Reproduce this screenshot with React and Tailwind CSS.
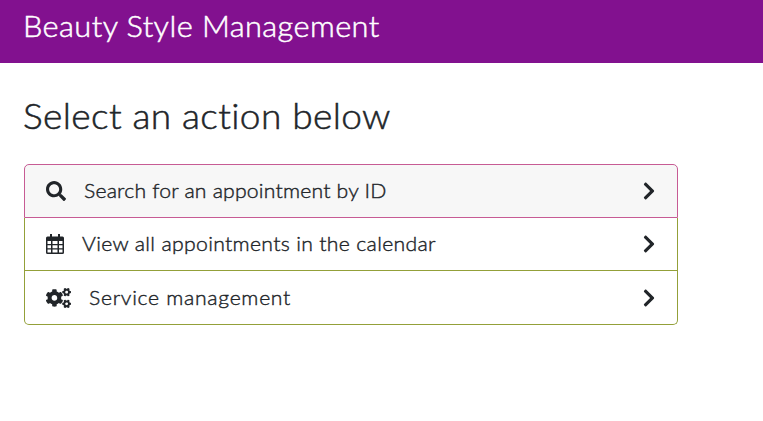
import { FaSearch, FaCogs, FaChevronRight } from "react-icons/fa";

function CalendarIcon() {
  return (
    <svg viewBox="0 0 18 20" className="h-[20px] w-[18px]" fill="currentColor">
      <path
        fillRule="evenodd"
        d="M4 0h2v2.500h6V0h2v2.500h2.500A1.500 1.500 0 0 1 18 4v14.500a1.500 1.500 0 0 1-1.500 1.500h-15A1.500 1.500 0 0 1 0 18.500V4a1.500 1.500 0 0 1 1.500-1.500H4zM1.500 7v3H5V7zM6.500 7v3h5V7zM13 7v3h3.500V7zM1.500 11.200v3H5v-3zM6.500 11.200v3h5v-3zM13 11.200v3h3.500v-3zM1.500 15.500v3H5v-3zM6.500 15.500v3h5v-3zM13 15.500v3h3.500v-3z"
      />
    </svg>
  );
}

const rows = [
  {
    icon: <FaSearch className="h-[20px] w-[20px]" />,
    text: "Search for an appointment by ID",
    iconBox: "w-[38px]",
    textStyle: "tracking-[0.18px]",
    rowStyle: "h-[54px] rounded-t-[5px] border border-[#c75b94] bg-[#f7f7f7]",
  },
  {
    icon: <CalendarIcon />,
    text: "View all appointments in the calendar",
    iconBox: "w-[36px]",
    textStyle: "tracking-[0.3px]",
    rowStyle: "h-[53px] border-x border-b border-[#93a039]",
  },
  {
    icon: <FaCogs className="h-[20px] w-[25px]" />,
    text: "Service management",
    iconBox: "w-[43px]",
    textStyle: "tracking-[0.65px]",
    rowStyle: "h-[54px] rounded-b-[5px] border-x border-b border-[#93a039]",
  },
];

export default function App() {
  return (
    <div className="h-[421px] overflow-hidden bg-white font-['Lato',sans-serif] font-light text-[#212529]">
      <header className="h-[63px] bg-[#82118f] pl-[23px] text-white">
        <h1 className="w-[500px] origin-left scale-x-[1.06] pt-[5px] text-[29px] leading-[42px] tracking-[0.4px] [-webkit-text-stroke:0.5px_currentColor]">
          Beauty Style Management
        </h1>
      </header>
      <main className="pl-[23px] pt-[28px]">
        <h2 className="w-[500px] origin-left scale-x-[1.06] text-[35px] leading-[48px] tracking-[0.35px] [-webkit-text-stroke:0.5px_currentColor]">
          Select an action below
        </h2>
        <div className="ml-[1px] mt-[25px] w-[654px]">
          {rows.map((row) => (
            <a key={row.text} className={`flex items-center justify-between pl-[21px] pr-[18px] text-[20px] ${row.rowStyle}`}>
              <span className="flex items-center">
                <span className={row.iconBox}>{row.icon}</span>
                <span className={`origin-left scale-x-[1.06] pb-[2px] [-webkit-text-stroke:0.4px_currentColor] ${row.textStyle}`}>
                  {row.text}
                </span>
              </span>
              <FaChevronRight />
            </a>
          ))}
        </div>
      </main>
    </div>
  );
}
